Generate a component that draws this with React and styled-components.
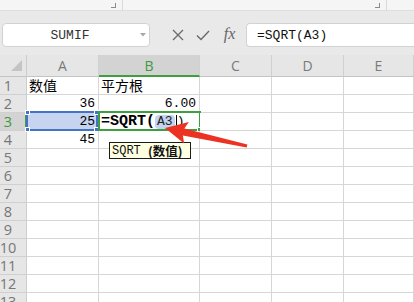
import React from "react";
import styled, { createGlobalStyle } from "styled-components";

const GlobalStyle = createGlobalStyle`
  html, body { margin: 0; padding: 0; background: #fff; overflow: hidden; }
  * { box-sizing: border-box; }
`;

const Frame = styled.div`
  position: relative;
  width: 414px;
  height: 302px;
  overflow: hidden;
  background: #fff;
  font-family: "Liberation Sans", Arial, sans-serif;
`;

const RibbonStrip = styled.div`
  display: flex;
  height: 11px;
  background: #f5f5f5;
  border-bottom: 1px solid #dedede;
`;

const RibbonGroup = styled.div`
  width: ${(p) => p.$w}px;
  height: 10px;
  display: flex;
  justify-content: flex-end;
  align-items: flex-start;
  padding: 3px 6px 0 0;
  border-right: 1px solid #dadada;
`;

const Launcher = styled.div`
  width: 5px;
  height: 5px;
  border-right: 1px solid #8c8c8c;
  border-bottom: 1px solid #8c8c8c;
`;

const FormulaRow = styled.div`
  display: flex;
  align-items: flex-start;
  height: 44px;
  padding-top: 12px;
  background: #e9e9e9;
`;

const NameBox = styled.div`
  margin-left: 2px;
  width: 148px;
  height: 24px;
  display: flex;
  align-items: center;
  background: #fff;
  border: 1px solid #d2d2d2;
  border-radius: 4px;
`;

const NameText = styled.span`
  flex: 1;
  text-align: center;
  font-family: "Liberation Mono", monospace;
  font-size: 13px;
  color: #333;
`;

const DropArrow = styled.span`
  width: 12px;
  display: flex;
  justify-content: center;
`;

const ToolIcons = styled.div`
  display: flex;
  margin-left: 15px;
`;

const ToolIcon = styled.div`
  width: 25px;
  height: 24px;
  display: flex;
  align-items: center;
  justify-content: center;
  color: #666;
`;

const FxText = styled.span`
  font-family: "Liberation Serif", "DejaVu Serif", serif;
  font-style: italic;
  font-size: 16px;
  color: #666;
  margin-left: 4px;
  margin-top: -2px;
`;

const FormulaInput = styled.div`
  flex: 1;
  margin-left: 6px;
  height: 24px;
  display: flex;
  align-items: center;
  padding-left: 10px;
  background: #fff;
  border: 1px solid #d2d2d2;
  border-right: none;
  border-radius: 4px 0 0 4px;
  font-family: "Liberation Mono", monospace;
  font-size: 13px;
  color: #111;
`;

const Sheet = styled.div`
  position: relative;
  display: grid;
  grid-template-columns: 27px 72px 101px 72px 72px 1fr;
  grid-template-rows: 22px repeat(13, 18px);
`;

const Corner = styled.div`
  background: #e6e6e6;
  border-right: 1px solid #cdcdcd;
  border-bottom: 1px solid #c4c4c4;
  display: flex;
  align-items: flex-end;
  justify-content: flex-end;
  padding: 0 4px 5px 0;
`;

const ColHeader = styled.div`
  background: ${(p) => (p.$active ? "#d3d3d3" : "#e6e6e6")};
  border-right: 1px solid #d0d0d0;
  border-bottom: ${(p) => (p.$active ? "2px solid #3f9e3f" : "1px solid #c4c4c4")};
  display: flex;
  align-items: center;
  justify-content: center;
  font-family: "Open Sans", "Liberation Sans", sans-serif;
  font-size: 14px;
  line-height: 18px;
  color: ${(p) => (p.$active ? "#3a9a3a" : "#7a7a7a")};
  padding-top: ${(p) => (p.$active ? "1px" : "0")};
`;

const RowHeader = styled.div`
  background: ${(p) => (p.$active ? "#d3d3d3" : "#e6e6e6")};
  border-right: ${(p) => (p.$active ? "2px solid #3f9e3f" : "1px solid #cdcdcd")};
  border-bottom: 1px solid #d0d0d0;
  display: flex;
  align-items: center;
  justify-content: center;
  padding-right: ${(p) => (p.$active ? "9px" : "10px")};
  font-family: "Open Sans", "Liberation Sans", sans-serif;
  font-size: 14.5px;
  line-height: 17px;
  overflow: hidden;
  color: ${(p) => (p.$active ? "#3a9a3a" : "#777")};
`;

const Cell = styled.div`
  position: relative;
  display: flex;
  align-items: center;
  justify-content: ${(p) => (p.$right ? "flex-end" : "flex-start")};
  padding: 0 3px 0 2px;
  background: ${(p) => (p.$selected ? "#c6d4ef" : "#fff")};
  border-right: 1px solid #d6d6d6;
  border-bottom: 1px solid #d6d6d6;
  font-family: ${(p) =>
    p.$cjk
      ? '"Noto Sans CJK SC", sans-serif'
      : '"Liberation Mono", monospace'};
  font-size: ${(p) => (p.$cjk ? "14px" : "13px")};
  line-height: 17px;
  color: #000;
  white-space: nowrap;
`;

const SelectFrame = styled.div`
  position: absolute;
  top: -2px;
  bottom: -1px;
  left: -1px;
  right: ${(p) => p.$right}px;
  border: 2px solid ${(p) => p.$color};
  pointer-events: none;
`;

const Handle = styled.span`
  position: absolute;
  width: 5px;
  height: 5px;
  background: ${(p) => p.$color};
  border: 1px solid #fff;
  ${(p) => (p.$top ? "top: -3px;" : "bottom: -3px;")}
  ${(p) => (p.$left ? "left: -3px;" : "right: -3px;")}
`;

const EditBold = styled.span`
  font-family: "Liberation Mono", monospace;
  font-weight: bold;
  font-size: 15px;
`;

const RefPill = styled.span`
  font-family: "Liberation Mono", monospace;
  font-size: 13px;
  line-height: 14px;
  background: #c3d3f0;
  border-radius: 4px;
  padding: 0 2px;
  color: #222;
`;

const Caret = styled.span`
  display: inline-block;
  width: 1px;
  height: 14px;
  background: #000;
  margin-left: 1px;
`;

const EditParen = styled.span`
  font-family: "Liberation Mono", monospace;
  font-size: 13px;
`;

const Tooltip = styled.div`
  position: absolute;
  top: 87px;
  left: 109px;
  width: 82px;
  height: 17px;
  display: flex;
  align-items: center;
  padding: 0 2px;
  background: #ffffe1;
  border: 1px solid #1c1c1c;
  font-family: "Liberation Mono", monospace;
  font-size: 12px;
  line-height: 14px;
  color: #111;
  white-space: pre;
`;

const TipArg = styled.span`
  font-family: "Noto Sans CJK SC", sans-serif;
  font-weight: bold;
  font-size: 12.5px;
  line-height: 14px;
`;

const ArrowLayer = styled.svg`
  position: absolute;
  left: 160px;
  top: 112px;
  pointer-events: none;
`;

const cols = ["A", "B", "C", "D", "E"];
const data = {
  1: [{ t: "数值", cjk: true }, { t: "平方根", cjk: true }],
  2: [{ t: "36", right: true }, { t: "6.00", right: true }],
  4: [{ t: "45", right: true }],
};

export default function App() {
  const rows = Array.from({ length: 13 }, (_, i) => i + 1);
  return (
    <Frame>
      <GlobalStyle />
      <RibbonStrip>
        <RibbonGroup $w={123}>
          <Launcher />
        </RibbonGroup>
        <RibbonGroup $w={264}>
          <Launcher />
        </RibbonGroup>
      </RibbonStrip>
      <FormulaRow>
        <NameBox>
          <NameText>SUMIF</NameText>
          <DropArrow>
            <svg width="6" height="4" viewBox="0 0 6 4">
              <path d="M0 0 L6 0 L3 3.5 Z" fill="#a8a8a8" />
            </svg>
          </DropArrow>
        </NameBox>
        <ToolIcons>
          <ToolIcon>
            <svg width="12" height="12" viewBox="0 0 12 12">
              <path d="M1 1 L11 11 M11 1 L1 11" stroke="#6a6a6a" strokeWidth="1.3" fill="none" />
            </svg>
          </ToolIcon>
          <ToolIcon>
            <svg width="14" height="11" viewBox="0 0 14 11">
              <path d="M1 5.5 L5 9.5 L13 1" stroke="#6a6a6a" strokeWidth="1.4" fill="none" />
            </svg>
          </ToolIcon>
          <ToolIcon>
            <FxText>fx</FxText>
          </ToolIcon>
        </ToolIcons>
        <FormulaInput>=SQRT(A3)</FormulaInput>
      </FormulaRow>
      <Sheet>
        <Corner>
          <svg width="11" height="11" viewBox="0 0 11 11">
            <path d="M11 0 L11 11 L0 11 Z" fill="#c4c4c4" />
          </svg>
        </Corner>
        {cols.map((c) => (
          <ColHeader key={c} $active={c === "B"}>
            {c}
          </ColHeader>
        ))}
        {rows.map((r) => (
          <React.Fragment key={r}>
            <RowHeader $active={r === 3}>{r}</RowHeader>
            {cols.map((c, ci) => {
              if (r === 3 && c === "A") {
                return (
                  <Cell key={c} $right $selected>
                    25
                    <SelectFrame $color="#4472c4" $right={0}>
                      <Handle $color="#4472c4" $top $left />
                      <Handle $color="#4472c4" $top />
                      <Handle $color="#4472c4" $left />
                      <Handle $color="#4472c4" />
                    </SelectFrame>
                  </Cell>
                );
              }
              if (r === 3 && c === "B") {
                return (
                  <Cell key={c}>
                    <EditBold>=SQRT(</EditBold>
                    <RefPill>A3</RefPill>
                    <Caret />
                    <EditParen>)</EditParen>
                    <SelectFrame $color="#3f9e3f" $right={-2}>
                      <Handle $color="#3f9e3f" />
                    </SelectFrame>
                  </Cell>
                );
              }
              const d = data[r] && data[r][ci];
              return (
                <Cell key={c} $right={d && d.right} $cjk={d && d.cjk}>
                  {d ? d.t : ""}
                </Cell>
              );
            })}
          </React.Fragment>
        ))}
        <Tooltip>
          SQRT <TipArg>(数值)</TipArg>
        </Tooltip>
      </Sheet>
      <ArrowLayer width="92" height="40" viewBox="0 0 92 40">
        <polygon
          points="5,16 28.85,9.95 24.35,16.6 87.34,32.44 86.66,35.56 22.85,23.5 24.15,31.45"
          fill="#ec3323"
        />
      </ArrowLayer>
    </Frame>
  );
}
